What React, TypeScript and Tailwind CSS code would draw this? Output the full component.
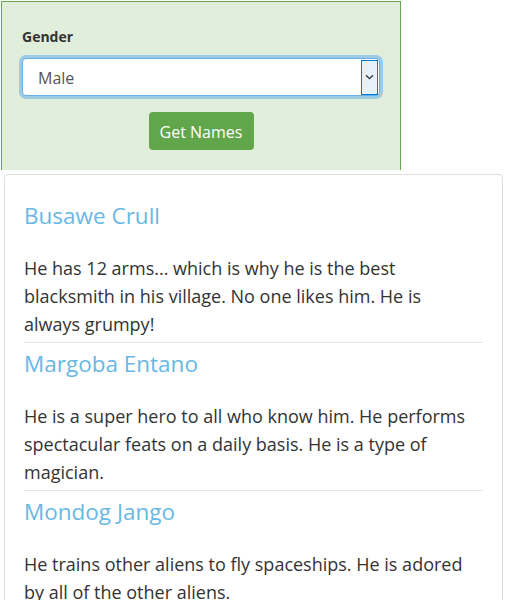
import React from "react";

const items = [
  {
    name: "Busawe Crull",
    lines: [
      "He has 12 arms... which is why he is the best",
      "blacksmith in his village. No one likes him. He is",
      "always grumpy!",
    ],
  },
  {
    name: "Margoba Entano",
    lines: [
      "He is a super hero to all who know him. He performs",
      "spectacular feats on a daily basis. He is a type of",
      "magician.",
    ],
  },
  {
    name: "Mondog Jango",
    lines: [
      "He trains other aliens to fly spaceships. He is adored",
      "by all of the other aliens.",
    ],
  },
];

export default function App() {
  return (
    <div className="w-[507px] h-[600px] overflow-hidden bg-white font-['Open_Sans',sans-serif] text-[#333]">
      <div className="ml-px mt-px w-[400px] h-[169px] bg-[#e1eedb] border-t border-l border-r border-[#6aa84f] px-5 pt-[25px]">
        <div className="text-[14px] leading-[20px] font-bold text-[#333]">Gender</div>
        <div className="mt-[11px] h-[38px] rounded-[4px] bg-white border border-[#66afe9] shadow-[0_0_0_3px_rgba(102,175,233,0.55)] flex items-center justify-between pl-[15px] pr-px">
          <span className="text-[16px] leading-[20px] pt-[2px] text-[#555]">Male</span>
          <div className="w-[17px] h-[35px] bg-[#e5f1fb] border border-[#0078d7] flex items-center justify-center">
            <svg width="9" height="6" viewBox="0 0 9 6" fill="none">
              <path d="M1 1.2 L4.5 4.6 L8 1.2" stroke="#333" strokeWidth="1.3" />
            </svg>
          </div>
        </div>
        <div className="flex justify-center mt-4">
          <button className="w-[105px] h-[38px] rounded-[4px] bg-[#61a64b] text-white text-[16px] leading-[20px] pt-[2px]">
            Get Names
          </button>
        </div>
      </div>
      <div className="mx-[4px] mt-[4px] border border-[#dddddd] rounded-[4px] px-[19px] pt-[20px] h-[500px]">
        {items.map((it, i) => (
          <div key={it.name} className={i < items.length - 1 ? "border-b border-[#e5e5e5] pb-[4px]" : ""}>
            <h3 className="text-[22.5px] leading-[42px] font-normal text-[#68b8e3]">{it.name}</h3>
            <p className="mt-[17px] text-[18px] leading-[28px] whitespace-nowrap">
              {it.lines.map((l, j) => (
                <React.Fragment key={j}>
                  {l}
                  {j < it.lines.length - 1 && <br />}
                </React.Fragment>
              ))}
            </p>
          </div>
        ))}
      </div>
    </div>
  );
}
